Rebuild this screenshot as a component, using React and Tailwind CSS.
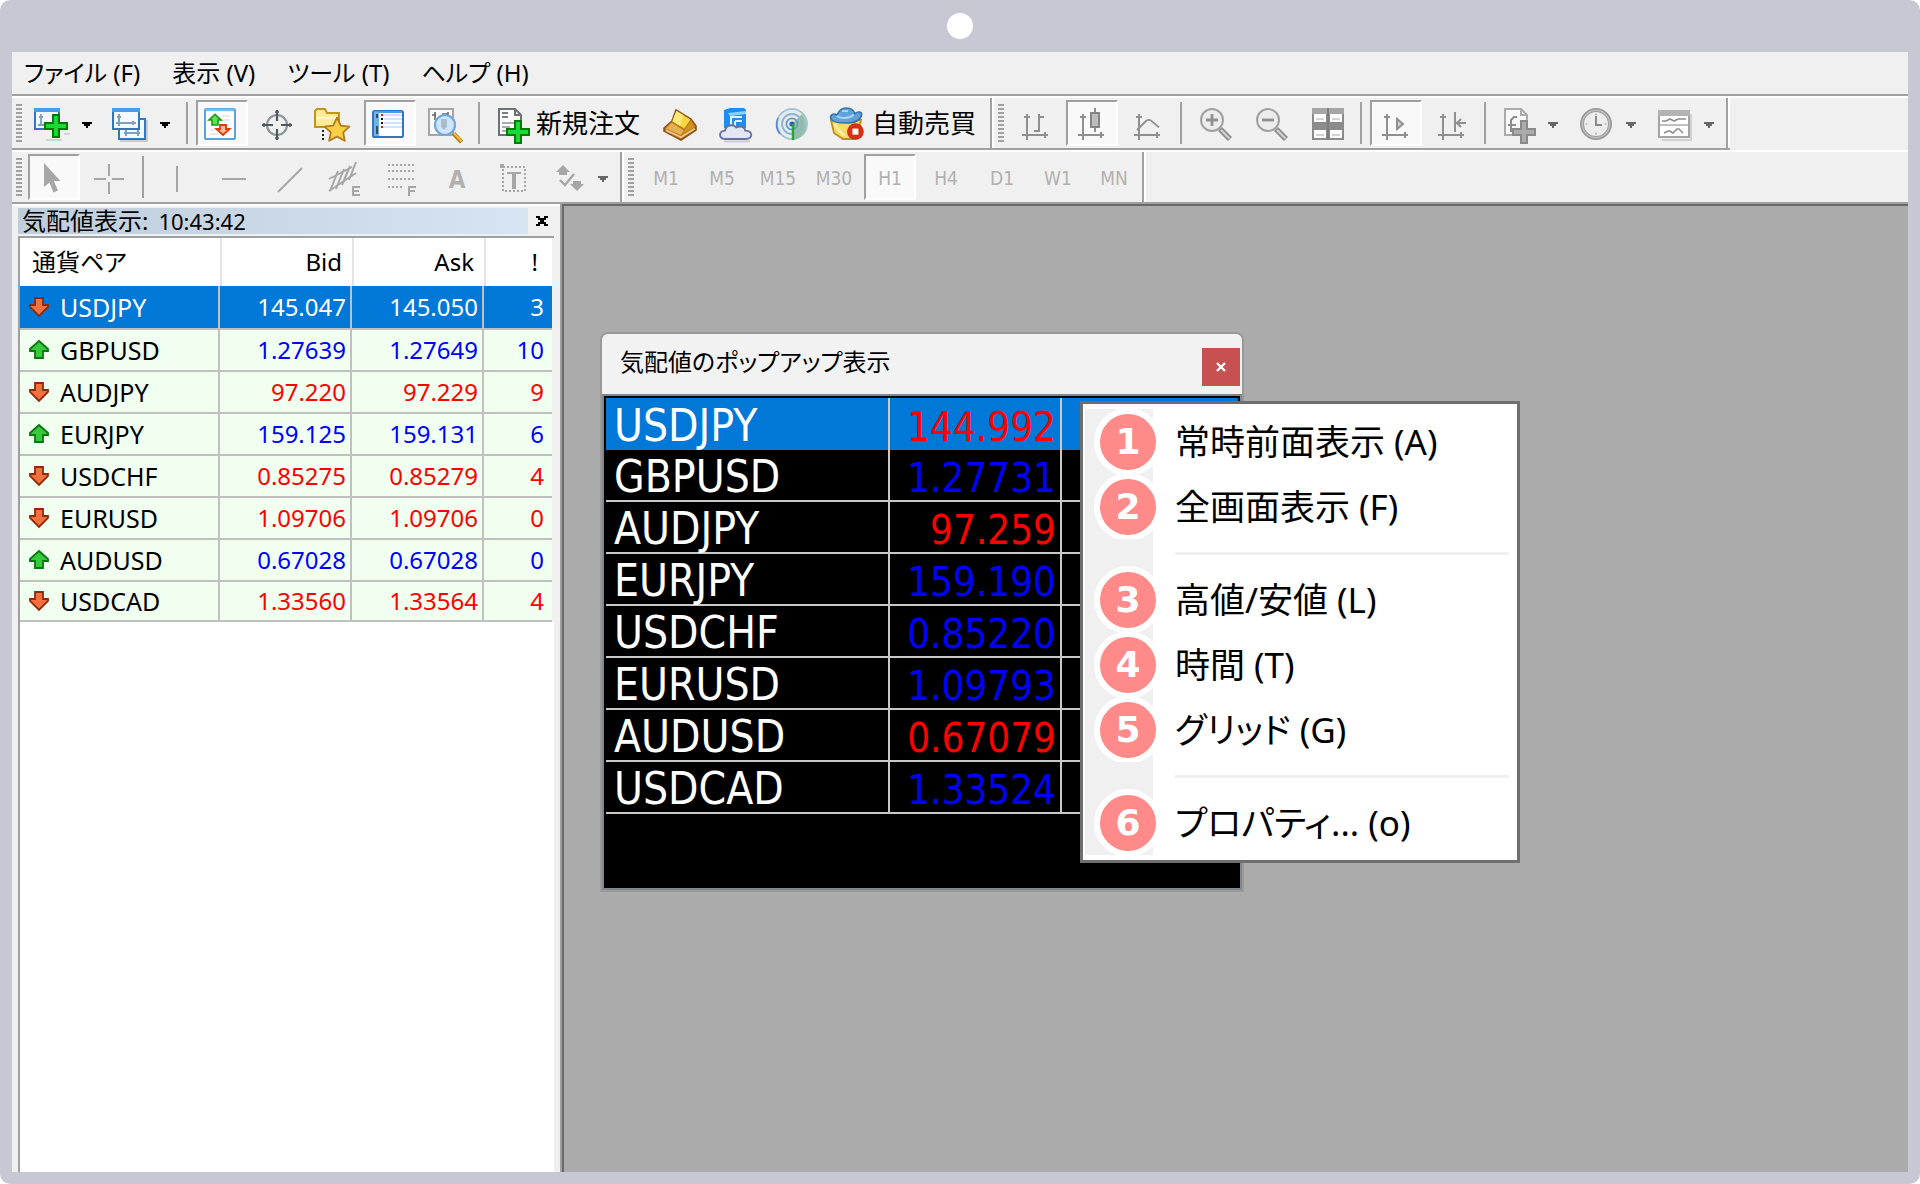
import React, { useState } from "react";

const quotes = [
  { symbol: "USDJPY", up: false, bid: "145.047", ask: "145.050", spread: 3 },
  { symbol: "GBPUSD", up: true, bid: "1.27639", ask: "1.27649", spread: 10 },
  { symbol: "AUDJPY", up: false, bid: "97.220", ask: "97.229", spread: 9 },
  { symbol: "EURJPY", up: true, bid: "159.125", ask: "159.131", spread: 6 },
  { symbol: "USDCHF", up: false, bid: "0.85275", ask: "0.85279", spread: 4 },
  { symbol: "EURUSD", up: false, bid: "1.09706", ask: "1.09706", spread: 0 },
  { symbol: "AUDUSD", up: true, bid: "0.67028", ask: "0.67028", spread: 0 },
  { symbol: "USDCAD", up: false, bid: "1.33560", ask: "1.33564", spread: 4 },
];

const popupQuotes = [
  { symbol: "USDJPY", bid: "144.992", red: true },
  { symbol: "GBPUSD", bid: "1.27731", red: false },
  { symbol: "AUDJPY", bid: "97.259", red: true },
  { symbol: "EURJPY", bid: "159.190", red: false },
  { symbol: "USDCHF", bid: "0.85220", red: false },
  { symbol: "EURUSD", bid: "1.09793", red: false },
  { symbol: "AUDUSD", bid: "0.67079", red: true },
  { symbol: "USDCAD", bid: "1.33524", red: false },
];

const timeframes = ["M1", "M5", "M15", "M30", "H1", "H4", "D1", "W1", "MN"];

// All toolbar icons share an 18 x 18 grid
const Icon = ({ children }) => (
  <svg viewBox="0 0 18 18" className="w-9 h-9 shrink-0 overflow-visible" fill="none" aria-hidden="true">
    {children}
  </svg>
);

const Plus = ({ x, y, stroke = "#007a00", fill = "#19d935" }) => (
  <path
    d={`M${x + 4.5} ${y + 0.5}h3v4h4v3h-4v4h-3v-4h-4v-3h4z`}
    fill={fill}
    stroke={stroke}
  />
);

const NewChartIcon = () => (
  <Icon>
    <rect x="0.5" y="0.5" width="12" height="10" fill="#f4f9ff" stroke="#2f78bd" />
    <path d="M0 1h13" stroke="#4d9be6" strokeWidth="2" />
    <path d="M3.5 3v6M2.5 4.5h2M2 8.500h6" stroke="#7ba3bf" strokeWidth="0.9" />
    <path d="M6 16h8M15 13h3" stroke="#000" strokeOpacity="0.12" />
    <Plus x={5} y={3} />
  </Icon>
);

const ProfilesIcon = () => (
  <Icon>
    <rect x="4" y="6" width="14" height="11" fill="#000" fillOpacity="0.15" />
    <rect x="3.5" y="5.5" width="13" height="10" fill="#f4f9ff" stroke="#2f78bd" />
    <path d="M6 12.5h8M7 11v3M13 11v3" stroke="#7ba3bf" />
    <rect x="0.5" y="0.5" width="13" height="10" fill="#f4f9ff" stroke="#2f78bd" />
    <path d="M0 1h14" stroke="#4d9be6" strokeWidth="2" />
    <path d="M3.5 3v6M2 7.5h10M2.5 4.5h2M10.5 6.5v2" stroke="#7ba3bf" />
  </Icon>
);

const MarketWatchIcon = () => (
  <Icon>
    <rect x="0.5" y="0.5" width="15" height="15" rx="0.8" fill="#fff" stroke="#5ba3d9" />
    <path d="M1 1h14" stroke="#7dbdec" strokeWidth="1.2" />
    <path d="M9 4h4M9 6h4M3 11h4M3 13h4" stroke="#e3e3e3" strokeWidth="0.8" />
    <path d="M5.5 3.2L8.5 6H7v2.500H4V6H2.500z" fill="#5fe05a" stroke="#1d9a18" strokeWidth="0.8" />
    <path d="M8 8.500h3v2h1.800L9.500 13.500 6.200 10.500H8z" fill="#ffb8a3" stroke="#e23a00" strokeWidth="0.9" />
  </Icon>
);

const DataWindowIcon = () => (
  <Icon>
    <circle cx="8.5" cy="8.5" r="5" stroke="#8c9699" strokeWidth="1.1" />
    <path d="M8.5 1v5.500M8.500 10.500V16M1 8.500h5.500M10.500 8.500H16" stroke="#4e595e" strokeWidth="1.1" />
    <path d="M7.5 2h2M7.500 15h2M2 7.500v2M15 7.500v2" stroke="#4e595e" strokeWidth="0.8" />
  </Icon>
);

const FolderStarIcon = () => (
  <Icon>
    <path d="M-0.500 9.500v-8L0.500 0.500h4l1 2h6v7z" fill="#fdeb96" stroke="#c29417" />
    <path d="M0 5h11" stroke="#fff7c9" />
    <path d="M3.5 11v1M3.500 13v1M3.500 15v1" stroke="#222" />
    <path
      d="M10.500 4.800l1.900 4 4.300.5-3.100 2.900.8 4.200-3.900-2.100-3.900 2.100.8-4.200-3.100-2.900 4.300-.5z"
      fill="#f9cf45"
      stroke="#b5791c"
      strokeWidth="0.9"
      strokeLinejoin="round"
    />
  </Icon>
);

const TerminalIcon = () => (
  <Icon>
    <rect x="0.5" y="1.5" width="15" height="13" rx="0.8" fill="#fff" stroke="#2f78bd" />
    <path d="M1 2h14" stroke="#4d9be6" />
    <rect x="1" y="2" width="2.5" height="12" fill="#6fb1e8" />
    <path d="M2.5 3v2M2.500 9v4" stroke="#3b4a5c" />
    <path d="M6 3.500h9M6 5.500h9M6 7.500h9M6 9.500h9" stroke="#d3e3fb" />
    <path d="M4.500 5.500h1M4.500 7.500h1" stroke="#111" />
    <path d="M4.500 3.500h1M4.500 9.500h1" stroke="#e11" />
  </Icon>
);

const TesterIcon = () => (
  <Icon>
    <rect x="0.5" y="0.5" width="12" height="13" fill="#fafafa" stroke="#a5a5a5" />
    <path d="M3.5 2v4M2 3.500h2M7 3h3M10 2v3" stroke="#666" strokeWidth="0.8" />
    <circle cx="8.5" cy="8.5" r="5" fill="#cfe6fa" stroke="#6ea8dc" strokeWidth="1.1" />
    <path d="M6.500 5.500h3v4l-1.500 1.500-1.500-1.500z" fill="#a9bccd" />
    <path d="M12.800 12.800l4 4.200" stroke="#b57a12" strokeWidth="2.2" />
    <path d="M13 12.600l3.800 4" stroke="#f5bf3b" strokeWidth="1" />
  </Icon>
);

const NewOrderIcon = () => (
  <Icon>
    <path d="M2.500 0.500h8l3 3v10h-11z" fill="#fff" stroke="#6d7075" />
    <path d="M10.500 0.500v3h3" stroke="#6d7075" />
    <path d="M4 2.500h3M4 4.500h3" stroke="#777f88" />
    <path d="M4 7.500h6M4 9.500h4M4 11.500h4" stroke="#8d949c" strokeWidth="0.8" />
    <Plus x={6} y={6} />
  </Icon>
);

const GoldIcon = () => (
  <Icon>
    <path d="M1 10l4-3.500L7 1l7.500 4.500L17 9v2l-7.500 5L1 11.500z" fill="#bb7a1c" stroke="#8f5410" strokeWidth="0.8" />
    <path d="M7.200 1.500l7 4.200-3 4.600L5.200 6.600z" fill="#f9d63c" />
    <path d="M7.200 1.500l3.500 2-1.500 5.500-4-2.400z" fill="#ffe97c" />
    <path d="M4.800 7.400l6 3.700-1.300 2.400-7.600-3.300z" fill="#e5b052" />
    <path d="M14.600 6.400l1.700 2.800-6 3.800 1.200-2.300z" fill="#d3921f" />
    <path d="M2 11.200l7.500 3.400 6.800-4.200" stroke="#eec493" strokeWidth="0.9" />
  </Icon>
);

const CloudIcon = () => (
  <Icon>
    <path d="M3 1l3-1h7l1 1v9H3z" fill="#1d8df0" />
    <path d="M5 2.500L14 1.500V3l-8 1z" fill="#8fd0ff" />
    <path d="M6.500 9V4.500H12M8.500 6.500H12M8.500 9V6.500" stroke="#e2f3ff" />
    <path
      d="M3.500 15.500c-3.300-.2-3.300-4 0-4.200.4-2.800 4.200-3.500 5.700-1.500 2-1.200 4.300-.2 4.400 1.500 4 .1 4 4.100.4 4.200z"
      fill="#e2e7f3"
      stroke="#65739c"
      strokeWidth="0.9"
    />
    <path d="M3 16.700h13" stroke="#000" strokeOpacity="0.15" />
  </Icon>
);

const SignalIcon = () => (
  <Icon>
    <circle cx="9" cy="8" r="7.5" fill="#e3ecee" stroke="#a9c3d6" />
    <path d="M9 8V16a8 8 0 0 0 7-8 8 8 0 0 0-2-5z" fill="#7db98a" fillOpacity="0.8" />
    <circle cx="9" cy="8" r="5" stroke="#8fb2d2" strokeWidth="0.9" />
    <circle cx="9" cy="8" r="2.8" stroke="#6e97c9" strokeWidth="0.9" />
    <path d="M2 5a8 8 0 0 0 1 8" stroke="#5d8fd0" strokeWidth="0.9" />
    <circle cx="9" cy="8" r="1.3" fill="#2d5fb5" />
    <path d="M9.500 8v8" stroke="#2aa234" strokeWidth="1.2" />
  </Icon>
);

const AutoTradingIcon = () => (
  <Icon>
    <path d="M0.500 6L2 12.500 6.500 15.500h5L14 12l1.500-6z" fill="#f6da6a" stroke="#c08e18" strokeWidth="0.9" />
    <path d="M2 8l5 6" stroke="#fff0a8" strokeWidth="1.2" />
    <path
      d="M0.500 5.500C-.2 3.500 1.500 2.500 3.500 3.500 4.500 1 6 0 8 0s3.800.6 4.300 2.800c1.700-1.200 3.900-1 3.500.7C15.200 6.200 12 7.500 8 7.500S1.200 7.200.5 5.500z"
      fill="#5fa3d8"
      stroke="#3474ab"
      strokeWidth="0.8"
    />
    <path d="M3.500 4c2 1.500 6 1.500 8.500-.8M6 1.500h3" stroke="#a9d3f3" />
    <circle cx="12.7" cy="11.8" r="4.2" fill="#d62f12" />
    <rect x="11.2" y="10.3" width="3" height="3" fill="#fff" />
  </Icon>
);

// Axis pair used by the chart-type and scroll icons
const Axes = () => (
  <>
    <path d="M4.500 3v13M2 13.500h13" stroke="#8f8f8f" />
    <path d="M3 4.500h3M13.500 12v3" stroke="#8f8f8f" />
  </>
);

const BarChartIcon = () => (
  <Icon>
    <Axes />
    <path d="M10.500 3v9M10.500 4.500H13M8 11.500h2.500" stroke="#8f8f8f" />
  </Icon>
);

const CandleIcon = () => (
  <Icon>
    <Axes />
    <path d="M10.500 0v12" stroke="#8f8f8f" />
    <rect x="8.5" y="2.5" width="4" height="7" fill="#bdbdbd" stroke="#858585" />
  </Icon>
);

const LineChartIcon = () => (
  <Icon>
    <Axes />
    <path d="M3.500 11L8 6.500c1-.8 2-.8 3 .2l3.500 3" stroke="#8f8f8f" strokeWidth="0.9" />
  </Icon>
);

const ZoomIcon = ({ plus }) => (
  <Icon>
    <path d="M12 10.500l5 5" stroke="#8e8e8e" strokeWidth="2.8" />
    <path d="M12.500 11l4.200 4.200" stroke="#d4d4d4" strokeWidth="1" />
    <circle cx="8" cy="6" r="5.5" fill="#ececec" stroke="#a0a0a0" />
    <path d={plus ? "M8 3v6M5 6h6" : "M5 6h6"} stroke="#8f8f8f" strokeWidth="1.4" />
  </Icon>
);

const TileIcon = () => (
  <Icon>
    <rect x="2" y="0" width="16" height="16" fill="#8b8b8b" />
    <path d="M2 0h7.500v3H2zM10.500 0H18v3h-7.500z" fill="#a6a6a6" />
    <path d="M3 3h6v4H3zM11 3h6v4h-6zM3 11h6v4H3zM11 11h6v4h-6z" fill="#fff" />
    <path d="M4 5.500h4M12 5.500h4M4 13.500h4M12 13.500h4" stroke="#c4c4c4" strokeWidth="0.8" />
    <path d="M10 0v16" stroke="#707070" strokeWidth="0.5" />
  </Icon>
);

const AutoScrollIcon = () => (
  <Icon>
    <Axes />
    <path d="M9.500 5.500v5l3-2.500z" fill="#cfcfcf" stroke="#8f8f8f" />
  </Icon>
);

const ShiftIcon = () => (
  <Icon>
    <Axes />
    <path d="M10.500 2v10M11 7.500h5M13.500 5.500L11.500 7.500l2 2" stroke="#8f8f8f" />
  </Icon>
);

const IndicatorsIcon = () => (
  <Icon>
    <path d="M2.500 0.500h8l3 3v10h-11z" fill="#f8f8f8" stroke="#ababab" />
    <path d="M10.500 0.500v3h3" stroke="#ababab" />
    <path d="M8.500 4.500H7L5.500 6v6M4 8.500h4" stroke="#8c8c8c" />
    <Plus x={6} y={6} stroke="#8a8a8a" fill="#ababab" />
  </Icon>
);

const ClockIcon = () => (
  <Icon>
    <circle cx="9" cy="8" r="7" fill="#ededed" stroke="#9b9b9b" strokeWidth="2" />
    <circle cx="9" cy="8" r="6.8" stroke="#c3c3c3" strokeWidth="0.6" />
    <path d="M9 4v4.500h3" stroke="#8a8a8a" />
    <path d="M9 2.800v.8M9 12.400v.8M3.800 8h.8M13.400 8h.8" stroke="#aaa" strokeWidth="0.8" />
  </Icon>
);

const TemplateIcon = () => (
  <Icon>
    <path d="M17.500 3v13H3" stroke="#000" strokeOpacity="0.12" />
    <rect x="1.5" y="1.5" width="15" height="13" fill="#fff" stroke="#a3a3a3" />
    <rect x="1" y="1" width="16" height="3" fill="#b3b3b3" />
    <path d="M2 8.500h14" stroke="#c0c0c0" />
    <path d="M3 6.500h2l2-1 2 1 2-1h4M4 12.500l2-1h1l1.500 1 2-2h1l2 2" stroke="#8c8c8c" strokeWidth="0.8" />
  </Icon>
);

const CursorIcon = () => (
  <Icon>
    <path d="M4 0.500v12l2.700-2.300 2 5 2.300-.9-2.100-4.800h3.300z" fill="#a6a6a6" />
  </Icon>
);

const CrossIcon = () => (
  <Icon>
    <path d="M8.500 1v6M8.500 10v6M1 8.500h6M10 8.500h6" stroke="#a6a6a6" />
  </Icon>
);

const VLineIcon = () => (
  <Icon>
    <path d="M9.500 2v13" stroke="#a6a6a6" />
  </Icon>
);

const HLineIcon = () => (
  <Icon>
    <path d="M4 8.500h12" stroke="#a6a6a6" />
  </Icon>
);

const TrendIcon = () => (
  <Icon>
    <path d="M4 15L16 3" stroke="#a6a6a6" />
  </Icon>
);

const ChannelIcon = () => (
  <Icon>
    <path d="M1.500 8.500L13 2.500M1.500 14.500L15 5.500" stroke="#a6a6a6" strokeWidth="0.9" />
    <path d="M2 14.500L6 4.500M5 13.500L9 3.500M8 11.500l4-9.500M11.500 9L15 0" stroke="#a6a6a6" strokeWidth="1" />
    <path d="M17 12.500h-3.500v4H17M13.500 14.500h3" stroke="#a6a6a6" />
  </Icon>
);

const FiboIcon = () => (
  <Icon>
    <path d="M3 1.500h13M3 4.500h13M3 8.500h13M3 12.500h8" stroke="#a6a6a6" strokeDasharray="1 1" />
    <path d="M17 12.500h-3.500V17M13.500 14.500h3" stroke="#a6a6a6" />
  </Icon>
);

const TextIcon = () => (
  <Icon>
    <text x="9.5" y="13" textAnchor="middle" className="font-['DejaVu_Sans_Condensed'] text-[12px] font-bold" fill="#b0b0b0">
      A
    </text>
  </Icon>
);

const LabelIcon = () => (
  <Icon>
    <rect x="4.5" y="2.5" width="11" height="12" stroke="#a6a6a6" strokeDasharray="1 1" />
    <rect x="3" y="1" width="2" height="2" fill="#a6a6a6" />
    <path d="M6.500 5.500h7" stroke="#a6a6a6" />
    <path d="M10 5.500v8" stroke="#a6a6a6" strokeWidth="2" />
  </Icon>
);

const ShapesIcon = () => (
  <Icon>
    <path d="M6.500 1.500L10 5H8.500v1.500h-4V5H3z" fill="#a6a6a6" />
    <path d="M11.500 11v-1.500h4V11H17l-3.500 3.500L10 11z" fill="#a6a6a6" />
    <path d="M5 9l2.500 2.500L12 6" stroke="#a6a6a6" strokeWidth="1.2" />
  </Icon>
);

const Caret = ({ dim }) => (
  <svg viewBox="0 0 5 3" className="w-2.5 h-1.5 mb-4" aria-hidden="true">
    <path d="M0 0h5v1H4v1H3v1H2V2H1V1H0z" fill={dim ? "#666" : "#000"} />
  </svg>
);

const QuoteArrow = ({ up }) => (
  <svg viewBox="0 0 12 12" className="w-6 h-6 shrink-0" aria-hidden="true">
    {up ? (
      <path d="M5.500 1.500L10 5.500v1H7.500V10h-4V6.500H1v-1z" fill="#35c93c" stroke="#0d7410" strokeWidth="0.9" />
    ) : (
      <path d="M3.500 1.500h4V5H10v1L5.500 10.500 1 6V5h2.500z" fill="#f4713f" stroke="#8f2a08" strokeWidth="0.9" />
    )}
  </svg>
);

const Grip = () => (
  <div className="w-1.5 h-[38px] shrink-0 bg-[repeating-linear-gradient(to_bottom,#a0a0a0_0_2px,transparent_2px_4px)]" />
);

const Sep = ({ wide }) => (
  <div className={`w-0.5 h-[42px] shrink-0 bg-[#a0a0a0] ${wide ? "mx-1" : "mx-0.5"}`} />
);

const pressedStyle = "border-t-[#a0a0a0] border-l-[#a0a0a0] border-b-white border-r-white bg-[#f9f9f9]";

const ToolButton = ({ label, pressed, children }) => (
  <button
    type="button"
    aria-label={label}
    aria-pressed={pressed}
    className={`w-[52px] h-[46px] shrink-0 flex items-end px-1.5 border-2 ${pressed ? pressedStyle : "border-transparent"}`}
  >
    {children}
  </button>
);

const DropButton = ({ label, dim, children }) => (
  <button type="button" aria-label={label} className="h-[46px] shrink-0 flex items-end gap-3 px-2 pb-0.5">
    {children}
    <Caret dim={dim} />
  </button>
);

const WideButton = ({ text, children }) => (
  <button type="button" className="h-[46px] shrink-0 flex items-end gap-1.5 pl-2 pr-2.5 pb-0.5">
    {children}
    <span className="h-[42px] flex items-center text-[26px] leading-none">{text}</span>
  </button>
);

const MenuBar = () => (
  <nav className="h-11 flex items-center gap-8 px-3 border-b-2 border-[#a0a0a0] text-2xl leading-none [font-feature-settings:'palt']">
    {["ファイル (F)", "表示 (V)", "ツール (T)", "ヘルプ (H)"].map((item) => (
      <button type="button" key={item} className="whitespace-nowrap">
        {item}
      </button>
    ))}
  </nav>
);

const StandardToolbar = () => (
  <div className="flex border-t-2 border-white shadow-[0_2px_0_#fff]">
    <div className="flex h-[52px] border-b-2 border-[#a0a0a0]">
      <div className="flex items-center gap-1 px-1 border-r-2 border-[#a0a0a0]">
        <Grip />
        <DropButton label="新規チャート"><NewChartIcon /></DropButton>
        <DropButton label="プロファイル"><ProfilesIcon /></DropButton>
        <Sep wide />
        <ToolButton label="気配値表示" pressed><MarketWatchIcon /></ToolButton>
        <ToolButton label="データウィンドウ"><DataWindowIcon /></ToolButton>
        <ToolButton label="ナビゲーター"><FolderStarIcon /></ToolButton>
        <ToolButton label="ターミナル" pressed><TerminalIcon /></ToolButton>
        <ToolButton label="ストラテジーテスター"><TesterIcon /></ToolButton>
        <Sep />
        <WideButton text="新規注文"><NewOrderIcon /></WideButton>
        <ToolButton label="メタエディター"><GoldIcon /></ToolButton>
        <ToolButton label="クラウド"><CloudIcon /></ToolButton>
        <ToolButton label="シグナル"><SignalIcon /></ToolButton>
        <WideButton text="自動売買"><AutoTradingIcon /></WideButton>
      </div>
      <div className="flex items-center gap-1 px-1 border-l-2 border-l-white border-r-2 border-r-[#a0a0a0]">
        <Grip />
        <div className="ml-0.5 flex items-center gap-1">
          <ToolButton label="バーチャート"><BarChartIcon /></ToolButton>
          <ToolButton label="ローソク足" pressed><CandleIcon /></ToolButton>
          <ToolButton label="ラインチャート"><LineChartIcon /></ToolButton>
          <Sep />
          <ToolButton label="拡大"><ZoomIcon plus /></ToolButton>
          <ToolButton label="縮小"><ZoomIcon /></ToolButton>
          <ToolButton label="整列"><TileIcon /></ToolButton>
          <Sep wide />
          <ToolButton label="自動スクロール" pressed><AutoScrollIcon /></ToolButton>
          <ToolButton label="チャートシフト"><ShiftIcon /></ToolButton>
          <Sep />
          <DropButton label="インディケータ" dim><IndicatorsIcon /></DropButton>
          <DropButton label="時間足設定" dim><ClockIcon /></DropButton>
          <DropButton label="テンプレート" dim><TemplateIcon /></DropButton>
        </div>
      </div>
      <div className="w-0.5 bg-white" />
    </div>
  </div>
);

const LineToolbar = ({ timeframe, onSelect }) => (
  <div className="mt-0.5 flex h-[52px] border-b-2 border-[#a0a0a0]">
    <div className="flex items-center gap-1 px-1 border-r-2 border-[#a0a0a0]">
      <Grip />
      <div className="ml-0.5 flex items-center gap-1">
        <ToolButton label="カーソル" pressed><CursorIcon /></ToolButton>
        <ToolButton label="クロスヘア"><CrossIcon /></ToolButton>
        <Sep />
        <ToolButton label="垂直線"><VLineIcon /></ToolButton>
        <ToolButton label="水平線"><HLineIcon /></ToolButton>
        <ToolButton label="トレンドライン"><TrendIcon /></ToolButton>
        <ToolButton label="等距離チャネル"><ChannelIcon /></ToolButton>
        <ToolButton label="フィボナッチ"><FiboIcon /></ToolButton>
        <ToolButton label="テキスト"><TextIcon /></ToolButton>
        <ToolButton label="ラベル"><LabelIcon /></ToolButton>
        <DropButton label="矢印" dim><ShapesIcon /></DropButton>
      </div>
    </div>
    <div className="flex items-center gap-1 pl-1 pr-0.5 border-l-2 border-l-white border-r-2 border-r-[#a0a0a0]">
      <Grip />
      <div className="ml-0.5 flex items-center gap-1">
        {timeframes.map((tf) => (
          <button
            type="button"
            key={tf}
            onClick={() => onSelect(tf)}
            className={`w-[52px] h-[46px] pt-0.5 border-2 text-[19px] leading-none text-[#b0b0b0] font-['DejaVu_Sans_Condensed','DejaVu_Sans',sans-serif] ${
              tf === timeframe ? pressedStyle : "border-transparent"
            }`}
          >
            {tf}
          </button>
        ))}
      </div>
    </div>
    <div className="w-0.5 bg-white" />
  </div>
);

const MarketWatch = () => (
  <aside className="w-[548px] shrink-0 flex flex-col border-t-2 border-white pt-0.5 pl-1.5 pr-1">
    <div className="flex items-center h-[26px] mb-0.5">
      <h2 className="flex-1 h-full flex items-center pl-1 bg-linear-to-r from-[#bfcddb] to-[#d7e4f2] text-2xl leading-none whitespace-nowrap">
        気配値表示:<span className="ml-2.5 text-[22px]">10:43:42</span>
      </h2>
      <button type="button" aria-label="閉じる" className="w-7 flex justify-center">
        <svg viewBox="0 0 6 5" className="w-3 h-2.5">
          <path d="M0 0h2v1h2V0h2v1H5v1H4v1h1v1h1v1H4V4H2v1H0V4h1V3h1V2H1V1H0z" fill="#000" />
        </svg>
      </button>
    </div>
    <div className="flex-1 bg-white border-t-2 border-l-2 border-[#a0a0a0] mr-0.5">
      <table className="w-full table-fixed border-separate border-spacing-0 text-2xl leading-none border-r-2 border-[#f0f0f0]">
        <colgroup>
          <col className="w-[200px]" />
          <col className="w-[132px]" />
          <col className="w-[132px]" />
          <col />
        </colgroup>
        <thead>
          <tr className="h-12">
            <th className="p-0 pl-3 font-normal text-left [font-feature-settings:'palt']">通貨ペア</th>
            <th className="p-0 pr-2.5 font-normal text-right border-l-2 border-[#e5e5e5]">Bid</th>
            <th className="p-0 pr-2.5 font-normal text-right border-l-2 border-[#e5e5e5]">Ask</th>
            <th className="p-0 pr-3.5 font-normal text-right border-l-2 border-[#e5e5e5]">!</th>
          </tr>
        </thead>
        <tbody>
          {quotes.map((q, i) => {
            const selected = i === 0;
            const num = selected ? "text-white" : q.up ? "text-[#0000ff]" : "text-[#ff0000]";
            return (
              <tr
                key={q.symbol}
                className={selected ? "h-11 bg-[#0078d7] text-white" : "h-[42px] last:h-10 bg-[#f0fff0]"}
              >
                <td className="p-0 border-b-2 border-r-2 border-[#c0c0c0]">
                  <div className="flex items-center gap-2 pl-2 text-[25px]">
                    <QuoteArrow up={q.up} />
                    {q.symbol}
                  </div>
                </td>
                <td className={`p-0 pr-1 text-right border-b-2 border-r-2 border-[#c0c0c0] ${num}`}>{q.bid}</td>
                <td className={`p-0 pr-1 text-right border-b-2 border-r-2 border-[#c0c0c0] ${num}`}>{q.ask}</td>
                <td className={`p-0 pr-2 text-right border-b-2 border-[#c0c0c0] ${num}`}>{q.spread}</td>
              </tr>
            );
          })}
        </tbody>
      </table>
    </div>
  </aside>
);

const QuotePopup = () => (
  <section className="absolute left-[38px] top-32 w-[640px] h-[556px] flex flex-col rounded-t-md bg-[#f2f2f2] shadow-[0_0_0_2px_#999]">
    <div className="h-[60px] shrink-0 flex items-start justify-between pl-[18px] pr-0.5">
      <h2 className="pt-4 text-2xl leading-none [font-feature-settings:'palt']">気配値のポップアップ表示</h2>
      <button
        type="button"
        aria-label="閉じる"
        className="mt-3.5 w-[38px] h-[38px] bg-[#c75050] flex items-center justify-center"
      >
        <svg viewBox="0 0 10 10" className="w-2.5 h-2.5">
          <path d="M1 1l8 8M9 1L1 9" stroke="#fff" strokeWidth="2.4" />
        </svg>
      </button>
    </div>
    <div className="flex-1 bg-black border-2 border-[#82868f] p-0.5">
      <table className="w-full table-fixed border-separate border-spacing-0 text-[44px] leading-none text-white font-['DejaVu_Sans_Condensed','DejaVu_Sans',sans-serif]">
        <colgroup>
          <col className="w-[284px]" />
          <col className="w-[172px]" />
          <col />
        </colgroup>
        <tbody>
          {popupQuotes.map((q, i) => {
            const line = i === 0 ? "border-b-0" : "border-b-2";
            return (
              <tr key={q.symbol} className={i === 0 ? "h-[52px] bg-[#0078d7]" : "h-[52px]"}>
                <td className={`p-0 pt-1 pl-2 border-r-2 border-[#c8c8c8] ${line}`}>{q.symbol}</td>
                <td className={`p-0 pt-1.5 pr-1 text-right text-[40px] border-r-2 border-[#c8c8c8] ${line} ${q.red ? "text-[#ff0000]" : "text-[#0000ff]"}`}>
                  {q.bid}
                </td>
                <td className={`p-0 border-[#c8c8c8] ${line}`} />
              </tr>
            );
          })}
        </tbody>
      </table>
    </div>
  </section>
);

const MenuItem = ({ number, text }) => (
  <li>
    <button type="button" className="w-full h-[65px] flex items-center text-left">
      <span className="w-[68px] h-full shrink-0 flex items-center pl-[9px] bg-[#f0f0f0]">
        <span className="w-[68px] h-[68px] shrink-0 rounded-full border-[6px] border-white bg-[#ff8a8a] flex items-center justify-center text-white text-4xl leading-none font-bold font-['DejaVu_Sans',sans-serif]">
          {number}
        </span>
      </span>
      <span className="pl-[22px] text-[35px] leading-none whitespace-nowrap [font-feature-settings:'palt']">{text}</span>
    </button>
  </li>
);

const MenuDivider = () => (
  <li className="h-7 flex items-center" role="separator">
    <span className="w-[68px] h-full bg-[#f0f0f0]" />
    <span className="flex-1 h-[3px] ml-[22px] mr-1.5 bg-[#f0f0f0]" />
  </li>
);

const ContextMenu = () => (
  <ul className="absolute left-[516px] top-[195px] w-[440px] px-0.5 py-[5px] bg-white border-[3px] border-[#6e6e6e]">
    <MenuItem number="1" text="常時前面表示 (A)" />
    <MenuItem number="2" text="全画面表示 (F)" />
    <MenuDivider />
    <MenuItem number="3" text="高値/安値 (L)" />
    <MenuItem number="4" text="時間 (T)" />
    <MenuItem number="5" text="グリッド (G)" />
    <MenuDivider />
    <MenuItem number="6" text="プロパティ... (o)" />
  </ul>
);

const App = () => {
  const [timeframe, setTimeframe] = useState("H1");

  return (
    <div className="min-h-screen flex flex-col rounded-[10px] bg-[#c8c8d4] px-3 pb-3 text-black font-['Noto_Sans','Noto_Sans_CJK_JP',sans-serif]">
      <div className="h-[52px] flex items-center justify-center">
        <div className="w-[26px] h-[26px] rounded-full bg-white" />
      </div>
      <div className="flex-1 flex flex-col bg-[#f0f0f0] overflow-hidden">
        <MenuBar />
        <StandardToolbar />
        <LineToolbar timeframe={timeframe} onSelect={setTimeframe} />
        <div className="flex-1 flex">
          <MarketWatch />
          <main className="flex-1 border-l-2 border-[#a0a0a0] flex">
            <div className="relative flex-1 border-t-2 border-l-2 border-[#696969] bg-[#ababab]">
              <QuotePopup />
              <ContextMenu />
            </div>
          </main>
        </div>
      </div>
    </div>
  );
};

export default App;
